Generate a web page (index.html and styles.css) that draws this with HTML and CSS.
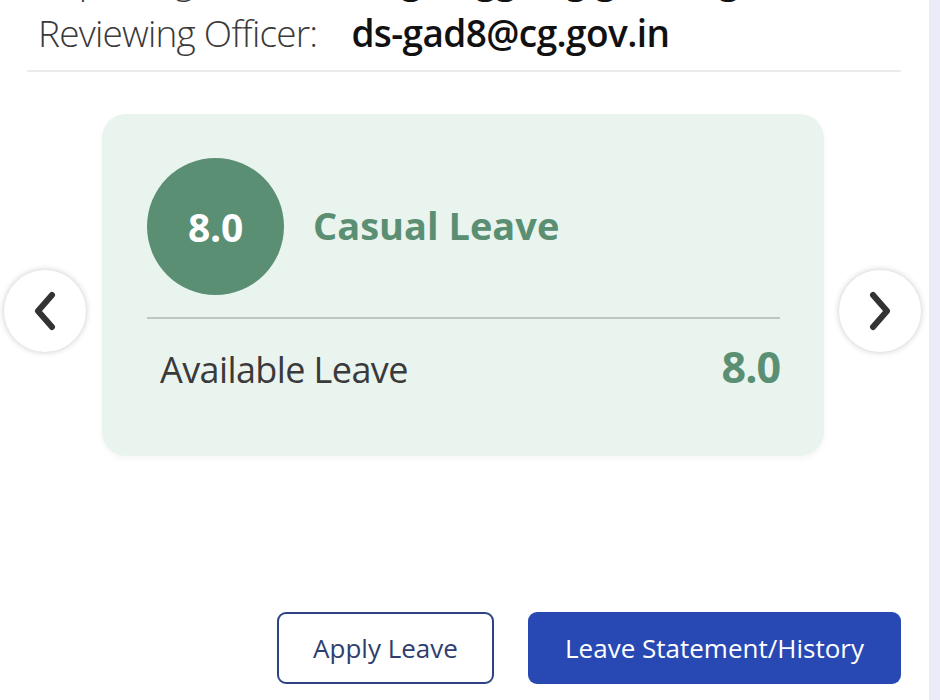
FILE: index.html
```html
<!doctype html>
<html>
<head>
<meta charset="utf-8">
<link rel="stylesheet" href="styles.css">
</head>
<body>
<div class="page">
  <div class="officers">
    <div class="officer officer-prev">
      <span class="officer-label">Reporting Officer:</span>
      <span class="officer-mail">us-gad-gg@cg.gov.in (gad)</span>
    </div>
    <div class="officer">
      <span class="officer-label">Reviewing Officer:</span>
      <span class="officer-mail">ds-gad8@cg.gov.in</span>
    </div>
  </div>

  <div class="slider">
    <button class="nav nav-prev" aria-label="Previous">
      <svg width="28" height="40" viewBox="0 0 28 40"><path d="M21 4 L7 20 L21 36" fill="none" stroke="#333" stroke-width="6" stroke-linecap="round" stroke-linejoin="round"/></svg>
    </button>

    <div class="card">
      <div class="card-head">
        <div class="balance">8.0</div>
        <div class="leave-type">Casual Leave</div>
      </div>
      <div class="card-row">
        <span class="row-label">Available Leave</span>
        <span class="row-value">8.0</span>
      </div>
    </div>

    <button class="nav nav-next" aria-label="Next">
      <svg width="28" height="40" viewBox="0 0 28 40"><path d="M7 4 L21 20 L7 36" fill="none" stroke="#333" stroke-width="6" stroke-linecap="round" stroke-linejoin="round"/></svg>
    </button>
  </div>

  <div class="actions">
    <button class="btn btn-outline">Apply Leave</button>
    <button class="btn btn-solid">Leave Statement/History</button>
  </div>
</div>
</body>
</html>
```

FILE: styles.css
```css
html, body {
	margin: 0;
	padding: 0;
	height: 100%;
	overflow: hidden;
}
body {
	background: #fff;
	font-family: "Open Sans", "Noto Sans", sans-serif;
	color: #222;
}
.page {
	display: flow-root;
	width: 929px;
	height: 700px;
	border-right: 11px solid #ececf8;
	overflow: hidden;
}

.officers {
	margin: -46px 28px 0 27px;
	padding-left: 11px;
	padding-bottom: 12px;
	border-bottom: 2px solid #ebebeb;
	display: flex;
	flex-direction: column;
	gap: 4px;
}
.officer {
	display: flex;
	align-items: baseline;
	gap: 34px;
	font-size: 37px;
	line-height: 50px;
	white-space: nowrap;
}
.officer-label {
	font-weight: 300;
	color: #3a3a3a;
	letter-spacing: -0.8px;
}
.officer-mail {
	font-weight: 600;
	color: #111;
	letter-spacing: -0.6px;
}

/* leave carousel */
.slider {
	display: flex;
	align-items: flex-start;
	margin-top: 42px;
	padding-left: 4px;
}
.nav {
	width: 82px;
	height: 82px;
	border-radius: 50%;
	border: none;
	background: #fff;
	box-shadow: 0 0 6px rgba(0,0,0,0.22);
	display: flex;
	align-items: center;
	justify-content: center;
	margin-top: 156px;
	padding: 0;
	flex-shrink: 0;
}
.card {
	width: 722px;
	height: 342px;
	margin: 0 15px 0 16px;
	background: #eaf4ee;
	border-radius: 24px;
	box-shadow: 0 3px 6px rgba(0,0,0,0.04);
	padding: 44px 44px 0 45px;
	box-sizing: border-box;
}
.card-head {
	display: flex;
	align-items: center;
	gap: 29px;
	padding-bottom: 22px;
	border-bottom: 2px solid #bcc7c0;
}
.balance {
	width: 137px;
	height: 137px;
	border-radius: 50%;
	background: #5a8f73;
	color: #fff;
	font-weight: 700;
	font-size: 39px;
	letter-spacing: -0.3px;
	display: flex;
	align-items: center;
	justify-content: center;
}
.leave-type {
	color: #5a8f73;
	font-weight: 700;
	font-size: 38px;
	padding-bottom: 4px;
}
.card-row {
	display: flex;
	justify-content: space-between;
	align-items: baseline;
	padding: 18px 0 0 13px;
}
.row-label {
	font-size: 36px;
	color: #3a3a3a;
	letter-spacing: -0.6px;
}
.row-value {
	font-size: 43px;
	font-weight: 700;
	color: #5a8f73;
	letter-spacing: -1px;
}

/* bottom buttons */
.actions {
	display: flex;
	justify-content: flex-end;
	gap: 34px;
	margin-top: 156px;
	padding-right: 28px;
}
.btn {
	height: 72px;
	border-radius: 9px;
	font-family: inherit;
	font-size: 26px;
	padding: 0;
}
.btn-outline {
	width: 217px;
	background: #fff;
	border: 2px solid #2d4383;
	color: #2f3e6e;
}
.btn-solid {
	width: 373px;
	background: #2849b4;
	border: none;
	color: #fff;
}
```
